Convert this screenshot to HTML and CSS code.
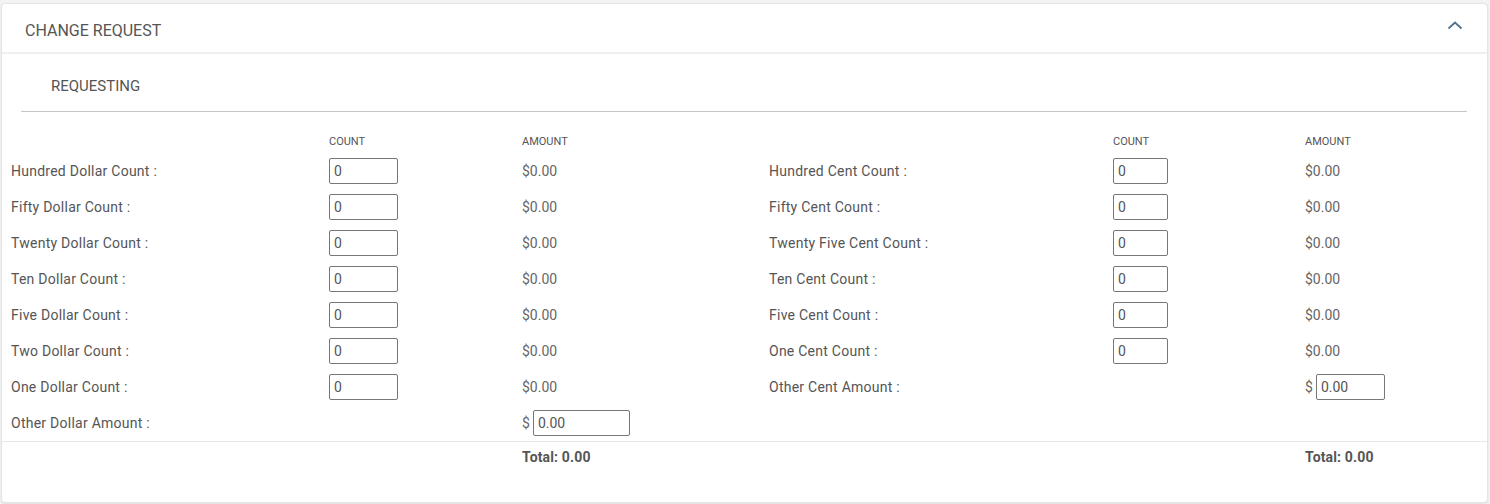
FILE: index.html
```html
<!DOCTYPE html>
<html lang="en">
  <head>
    <meta charset="UTF-8" />
    <meta name="viewport" content="width=device-width, initial-scale=1.0" />
    <link rel="stylesheet" href="styles.css">
  </head>
  <body>
    <div class="card">
      <div class="card-header">
        <span class="card-title">CHANGE REQUEST</span>
        <svg class="chevron" width="16" height="10" viewBox="0 0 16 10">
          <polyline points="1.5,8.5 8,2.5 14.5,8.5" fill="none" stroke="#4f7290" stroke-width="1.8" />
        </svg>
      </div>

      <div class="tabs">
        <span class="tab">REQUESTING</span>
      </div>

      <div class="denoms">
        <div class="row head">
          <span></span>
          <span class="col-title">COUNT</span>
          <span class="col-title">AMOUNT</span>
          <span></span>
          <span class="col-title">COUNT</span>
          <span class="col-title">AMOUNT</span>
        </div>

        <div class="row">
          <label>Hundred Dollar Count :</label>
          <input class="count" type="text" value="0" />
          <span class="amount">$0.00</span>
          <label>Hundred Cent Count :</label>
          <input class="count small" type="text" value="0" />
          <span class="amount">$0.00</span>
        </div>

        <div class="row">
          <label>Fifty Dollar Count :</label>
          <input class="count" type="text" value="0" />
          <span class="amount">$0.00</span>
          <label>Fifty Cent Count :</label>
          <input class="count small" type="text" value="0" />
          <span class="amount">$0.00</span>
        </div>

        <div class="row">
          <label>Twenty Dollar Count :</label>
          <input class="count" type="text" value="0" />
          <span class="amount">$0.00</span>
          <label>Twenty Five Cent Count :</label>
          <input class="count small" type="text" value="0" />
          <span class="amount">$0.00</span>
        </div>

        <div class="row">
          <label>Ten Dollar Count :</label>
          <input class="count" type="text" value="0" />
          <span class="amount">$0.00</span>
          <label>Ten Cent Count :</label>
          <input class="count small" type="text" value="0" />
          <span class="amount">$0.00</span>
        </div>

        <div class="row">
          <label>Five Dollar Count :</label>
          <input class="count" type="text" value="0" />
          <span class="amount">$0.00</span>
          <label>Five Cent Count :</label>
          <input class="count small" type="text" value="0" />
          <span class="amount">$0.00</span>
        </div>

        <div class="row">
          <label>Two Dollar Count :</label>
          <input class="count" type="text" value="0" />
          <span class="amount">$0.00</span>
          <label>One Cent Count :</label>
          <input class="count small" type="text" value="0" />
          <span class="amount">$0.00</span>
        </div>

        <div class="row">
          <label>One Dollar Count :</label>
          <input class="count" type="text" value="0" />
          <span class="amount">$0.00</span>
          <label>Other Cent Amount :</label>
          <span></span>
          <span class="amount">$<input class="other" type="text" value="0.00" /></span>
        </div>

        <div class="row">
          <label>Other Dollar Amount :</label>
          <span></span>
          <span class="amount">$<input class="other wide" type="text" value="0.00" /></span>
          <span></span>
          <span></span>
          <span></span>
        </div>
      </div>

      <div class="totals">
        <div class="row total-row">
          <span></span>
          <span></span>
          <span class="total">Total: 0.00</span>
          <span></span>
          <span></span>
          <span class="total">Total: 0.00</span>
        </div>
      </div>
    </div>
  </body>
</html>
```

FILE: styles.css
```css
* {
  margin: 0;
  padding: 0;
  box-sizing: border-box;
}

body {
  font-family: "Roboto", "Liberation Sans", sans-serif;
  background: #f3f3f3;
  color: #555;
  padding: 3px 2px 1px 1px;
}

.card {
  background: white;
  border: 1px solid #e4e4e4;
  border-radius: 4px;
  box-shadow: 0 1px 2px rgba(0, 0, 0, 0.08);
  padding-bottom: 30px;
}

.card-header {
  display: flex;
  justify-content: space-between;
  height: 50px;
  padding: 4px 24px 0 23px;
  align-items: center;
  border-bottom: 2px solid #efefef;
}

.card-title {
  font-size: 16px;
  color: #555;
}

.chevron {
  align-self: flex-start;
  margin-top: 12px;
}

.tabs {
  margin: 13px 20px 0 19px;
  border-bottom: 1px solid #c6c6c6;
  height: 45px;
  padding-top: 9px;
}

.tab {
  display: inline-block;
  padding: 0 30px;
  font-size: 15px;
  line-height: 20px;
  color: #555;
}

.denoms {
  margin-top: 18px;
  padding-left: 9px;
}

.row {
  display: grid;
  grid-template-columns: 318px 193px 247px 344px 192px 1fr;
  align-items: center;
  height: 36px;
}

.row.head {
  height: 23px;
}

.col-title {
  font-size: 11px;
  color: #555;
}

.row label {
  font-size: 14px;
  letter-spacing: 0.25px;
  color: #555;
}

.amount {
  font-size: 14px;
  color: #666;
  display: flex;
  align-items: center;
  gap: 3px;
}

input {
  font-family: "Roboto", "Liberation Sans", sans-serif;
  font-size: 14px;
  color: #555;
  height: 26px;
  border: 1px solid #777;
  border-radius: 2px;
  padding: 0 4px;
  background: white;
}

.count {
  width: 69px;
}

.count.small {
  width: 55px;
}

.other {
  width: 69px;
}

.other.wide {
  width: 97px;
}

.totals {
  border-top: 1px solid #e8e8e8;
  padding-left: 9px;
}

.total-row {
  height: 30px;
}

.total {
  font-size: 14px;
  font-weight: bold;
  letter-spacing: 0.15px;
  color: #555;
}
```
